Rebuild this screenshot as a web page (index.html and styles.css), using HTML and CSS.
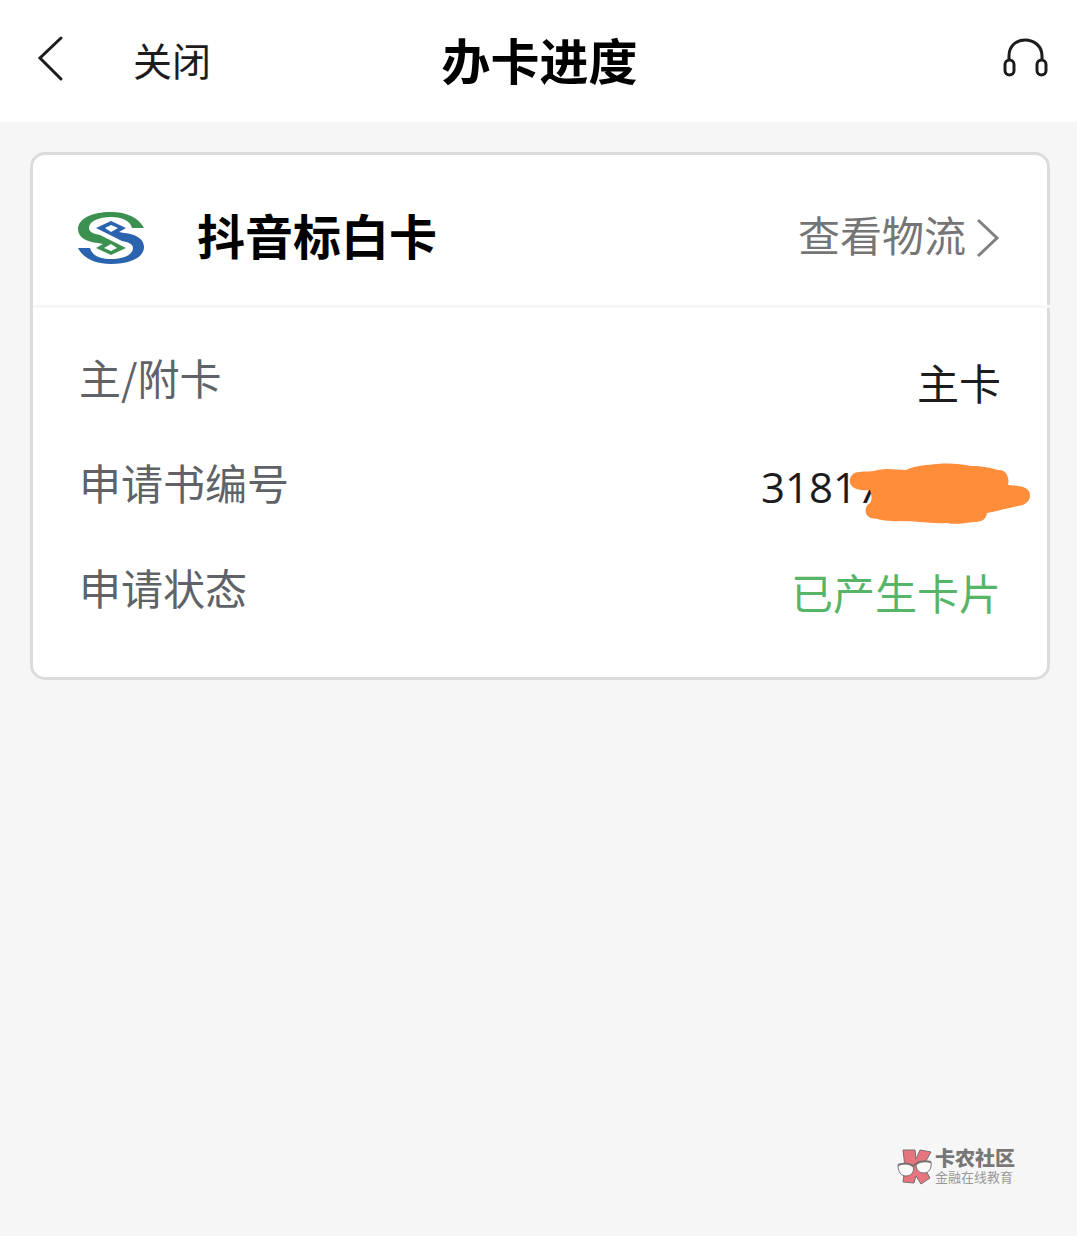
FILE: index.html
```html
<!DOCTYPE html>
<html lang="zh-CN">
<head>
    <meta charset="UTF-8">
    <meta name="viewport" content="width=device-width, initial-scale=1.0">
    <title>办卡进度</title>
    <link rel="stylesheet" href="styles.css">
</head>
<body>
    <header class="navbar">
        <div class="nav-left">
            <button type="button" class="icon-button" aria-label="返回">
                <svg width="28" height="48" viewBox="0 0 28 48" fill="none" stroke="#1c1c1e" stroke-width="3" stroke-linecap="round">
                    <path d="M25 3L4 23L25 44"/>
                </svg>
            </button>
            <button type="button" class="close-button">关闭</button>
        </div>
        <h1>办卡进度</h1>
        <button type="button" class="icon-button service" aria-label="客服">
            <svg width="48" height="42" viewBox="0 0 48 42" fill="none" stroke="#1c1c1e" stroke-width="3">
                <path d="M8 22V18C8 8 15 2 24 2S41 8 41 18V22"/>
                <rect x="4" y="22" width="9" height="15" rx="4.5"/>
                <rect x="36" y="22" width="9" height="15" rx="4.5"/>
            </svg>
        </button>
    </header>

    <main>
        <section class="card">
            <div class="card-header">
                <svg class="bank-logo" width="68" height="52" viewBox="0 0 68 52" fill-rule="evenodd">
                    <path id="swirl" fill="#3d9150" d="M67 16C62 6 50 0 34 0C14 0 1 7 1 17C1 25 9 30 21 31L26 32L19 36L34 43L49 36L23 23C17 22 12 20 12 16C12 9 22 5 34 5C46 5 53 9 55 16ZM34 32L40 36L34 39L27 36Z"/>
                    <path fill="#2b63ae" transform="rotate(180 34 26)" d="M67 16C62 6 50 0 34 0C14 0 1 7 1 17C1 25 9 30 21 31L26 32L19 36L34 43L49 36L23 23C17 22 12 20 12 16C12 9 22 5 34 5C46 5 53 9 55 16ZM34 32L40 36L34 39L27 36Z"/>
                </svg>
                <h2>抖音标白卡</h2>
                <a href="#" class="logistics">
                    <span>查看物流</span>
                    <svg width="24" height="40" viewBox="0 0 24 40" fill="none" stroke="#808080" stroke-width="3">
                        <path d="M2 2L21 20L2 38"/>
                    </svg>
                </a>
            </div>
            <dl class="details">
                <div class="row">
                    <dt>主/附卡</dt>
                    <dd>主卡</dd>
                </div>
                <div class="row">
                    <dt>申请书编号</dt>
                    <dd class="number">
                        31817
                        <svg class="scribble" width="182" height="62" viewBox="0 0 182 62">
                            <path fill="#ff8d3a" d="M10 9C17 8 23 9 29 7C39 5 47 7 57 7C68 2 79 2 88 1C101 0 113 1 122 3C133 3 142 5 149 7C156 6 161 13 159 22C167 23 174 22 179 27C183 32 181 39 174 42C162 44 149 48 138 50C137 57 132 59 125 59C115 60 107 62 98 60C82 61 67 58 51 58C38 59 31 56 22 55C15 53 15 43 21 40C24 36 22 31 21 27C11 28 3 26 1 20C0 14 4 9 10 9Z"/>
                        </svg>
                    </dd>
                </div>
                <div class="row">
                    <dt>申请状态</dt>
                    <dd class="done">已产生卡片</dd>
                </div>
            </dl>
        </section>
    </main>

    <footer class="watermark">
        <svg width="38" height="38" viewBox="0 0 38 38" stroke="#77706f" stroke-width="1" stroke-linejoin="round">
            <path fill="#e7757d" d="M6 2L18 2L19 11L23 2L34 4L26 18L33 30L24 36L19 28L17 35L6 34L8 19Z"/>
            <path fill="#fafafa" d="M1 17C6 15 12 15 16 18C18 24 14 28 9 28C4 28 1 24 1 17ZM19 16C23 13 29 13 34 14C35 20 32 25 27 25C22 25 19 22 19 16Z"/>
            <path fill="none" stroke-width="2" d="M1 17C6 15 12 15 16 18L19 16C23 13 29 13 34 14"/>
        </svg>
        <div>
            <strong>卡农社区</strong>
            <small>金融在线教育</small>
        </div>
    </footer>
</body>
</html>
```

FILE: styles.css
```css
* {
    box-sizing: border-box;
}

body {
    margin: 0;
    min-height: 100vh;
    display: flex;
    flex-direction: column;
    background: #f6f6f6;
    color: #1c1c1e;
    font-family: "Noto Sans CJK SC", sans-serif;
}

h1, h2, dl, dd {
    margin: 0;
}

button {
    padding: 0;
    border: none;
    background: none;
    color: inherit;
    font-family: inherit;
    cursor: pointer;
}

svg {
    display: block;
    flex: none;
}

/* Top bar */
.navbar {
    display: grid;
    grid-template-columns: 1fr auto 1fr;
    align-items: center;
    height: 122px;
    padding: 0 28px 4px 30px;
    background: #fff;
}

.nav-left {
    display: flex;
    align-items: center;
    gap: 69px;
    padding-left: 6px;
}

.close-button {
    font-size: 39px;
    line-height: 56px;
}

h1 {
    color: #000;
    font-size: 49px;
    font-weight: 700;
    line-height: 64px;
}

.service {
    justify-self: end;
}

/* Card */
main {
    flex: 1;
    padding: 30px 27px 30px 30px;
}

.card {
    border: 3px solid #dbdbdb;
    border-radius: 15px;
    background: #fff;
}

.card-header {
    display: flex;
    align-items: center;
    height: 153px;
    margin-right: -3px;
    padding: 15px 50px 0 44px;
    border-bottom: 3px solid #f5f6f7;
}

h2 {
    margin-left: 52px;
    padding-bottom: 8px;
    color: #000;
    font-size: 48px;
    font-weight: 700;
    line-height: 64px;
}

.logistics {
    display: flex;
    align-items: center;
    gap: 10px;
    margin-left: auto;
    color: #757575;
    font-size: 42px;
    line-height: 60px;
    text-decoration: none;
}

.logistics span {
    padding-bottom: 8px;
}

.details {
    display: grid;
    gap: 35px;
    padding: 39px 46px 50px;
    font-size: 42px;
}

.row {
    display: flex;
    justify-content: space-between;
    align-items: flex-start;
}

dt {
    color: #5f6368;
    line-height: 60px;
}

dd {
    line-height: 70px;
}

.number {
    position: relative;
    width: 240px;
    font-family: "Open Sans", sans-serif;
}

.scribble {
    position: absolute;
    top: 11px;
    right: -30px;
}

.done {
    color: #56b567;
}

/* Watermark */
.watermark {
    display: flex;
    align-items: center;
    align-self: flex-end;
    margin: 0 62px 50px 0;
    color: #777;
}

.watermark strong {
    display: block;
    font-size: 20px;
    font-weight: 900;
    line-height: 20px;
}

.watermark small {
    display: block;
    color: #999;
    font-size: 13px;
    line-height: 18px;
}
```
